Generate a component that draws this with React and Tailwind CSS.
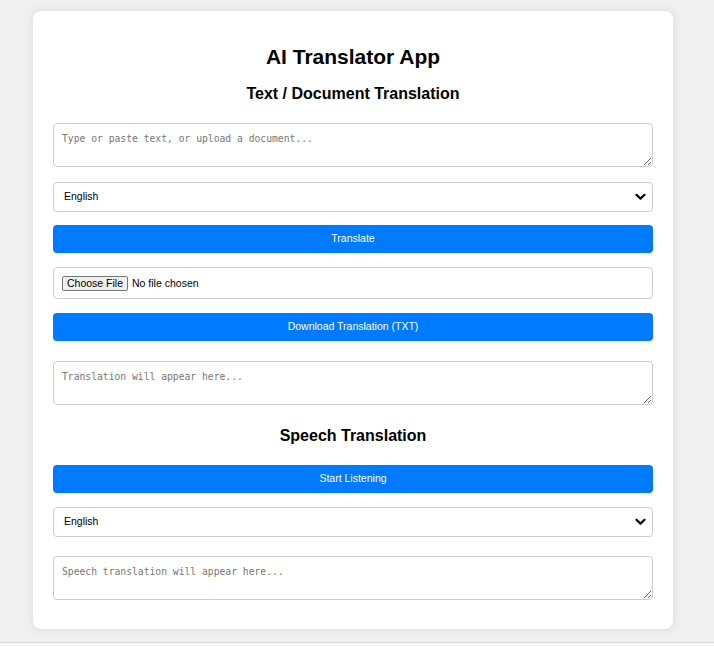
import React from "react";

function Chevron() {
  return (
    <svg
      className="absolute right-[7px] top-1/2 -translate-y-1/2 pointer-events-none"
      width="11"
      height="8"
      viewBox="0 0 11 8"
    >
      <path d="M1.5 1.8 L5.5 5.6 L9.5 1.8" fill="none" stroke="#000" strokeWidth="2.2" strokeLinecap="round" strokeLinejoin="round" />
    </svg>
  );
}

function LangSelect({ className }) {
  return (
    <div className={"relative h-[30px] " + className}>
      <select className="appearance-none w-full h-full border border-[#cccccc] rounded-[4px] bg-white pl-[10px] pr-[24px] text-[10.5px] text-black font-['Liberation_Sans',Arial,sans-serif] outline-none">
        <option>English</option>
        <option>Spanish</option>
        <option>French</option>
      </select>
      <Chevron />
    </div>
  );
}

function Area({ placeholder, className }) {
  return (
    <textarea
      placeholder={placeholder}
      className={
        "block w-full h-[44px] border border-[#cccccc] rounded-[4px] px-[8px] pt-[9px] pb-[6px] font-['DejaVu_Sans_Mono',monospace] text-[9.7px] leading-[12px] text-black placeholder:text-[#767676] bg-white outline-none resize-y " +
        className
      }
    />
  );
}

function BlueButton({ children, className }) {
  return (
    <button
      className={
        "w-full h-[28px] bg-[#007bff] text-white text-[10.5px] rounded-[4px] font-['Liberation_Sans',Arial,sans-serif] " +
        className
      }
    >
      {children}
    </button>
  );
}

export default function App() {
  return (
    <div className="min-h-screen bg-[#f6f6f6] font-['Liberation_Sans',Arial,sans-serif] text-black">
      <div className="h-[643px] bg-[#f0f0f0] border-b border-[#d8d8d8] pt-[11px] pl-[33px] flex justify-start">
        <div className="w-[640px] self-start bg-white rounded-[8px] shadow-[0_0_10px_rgba(0,0,0,0.1)] px-[20px] pt-[20px] pb-[29px] flex flex-col">
          <h1 className="mt-[14px] text-[21px] leading-[24px] font-bold text-center">AI Translator App</h1>
          <h2 className="mt-[15px] text-[16px] leading-[19px] font-bold text-center">Text / Document Translation</h2>

          <Area className="mt-[20px]" placeholder="Type or paste text, or upload a document..." />

          <LangSelect className="mt-[15px]" />

          <BlueButton className="mt-[13px]">Translate</BlueButton>

          <div className="mt-[14px] h-[32px] border border-[#cccccc] rounded-[4px] px-[8px] flex items-center text-[10.5px]">
            <span className="h-[15px] px-[4px] border border-[#767676] bg-[#efefef] rounded-[2px] flex items-center leading-none">
              Choose File
            </span>
            <span className="ml-[4px] leading-none">No file chosen</span>
          </div>

          <BlueButton className="mt-[14px]">Download Translation (TXT)</BlueButton>

          <Area className="mt-[20px]" placeholder="Translation will appear here..." />

          <h2 className="mt-[21px] text-[16px] leading-[19px] font-bold text-center">Speech Translation</h2>

          <BlueButton className="mt-[20px]">Start Listening</BlueButton>

          <LangSelect className="mt-[14px]" />

          <Area className="mt-[19px]" placeholder="Speech translation will appear here..." />
        </div>
      </div>
    </div>
  );
}
